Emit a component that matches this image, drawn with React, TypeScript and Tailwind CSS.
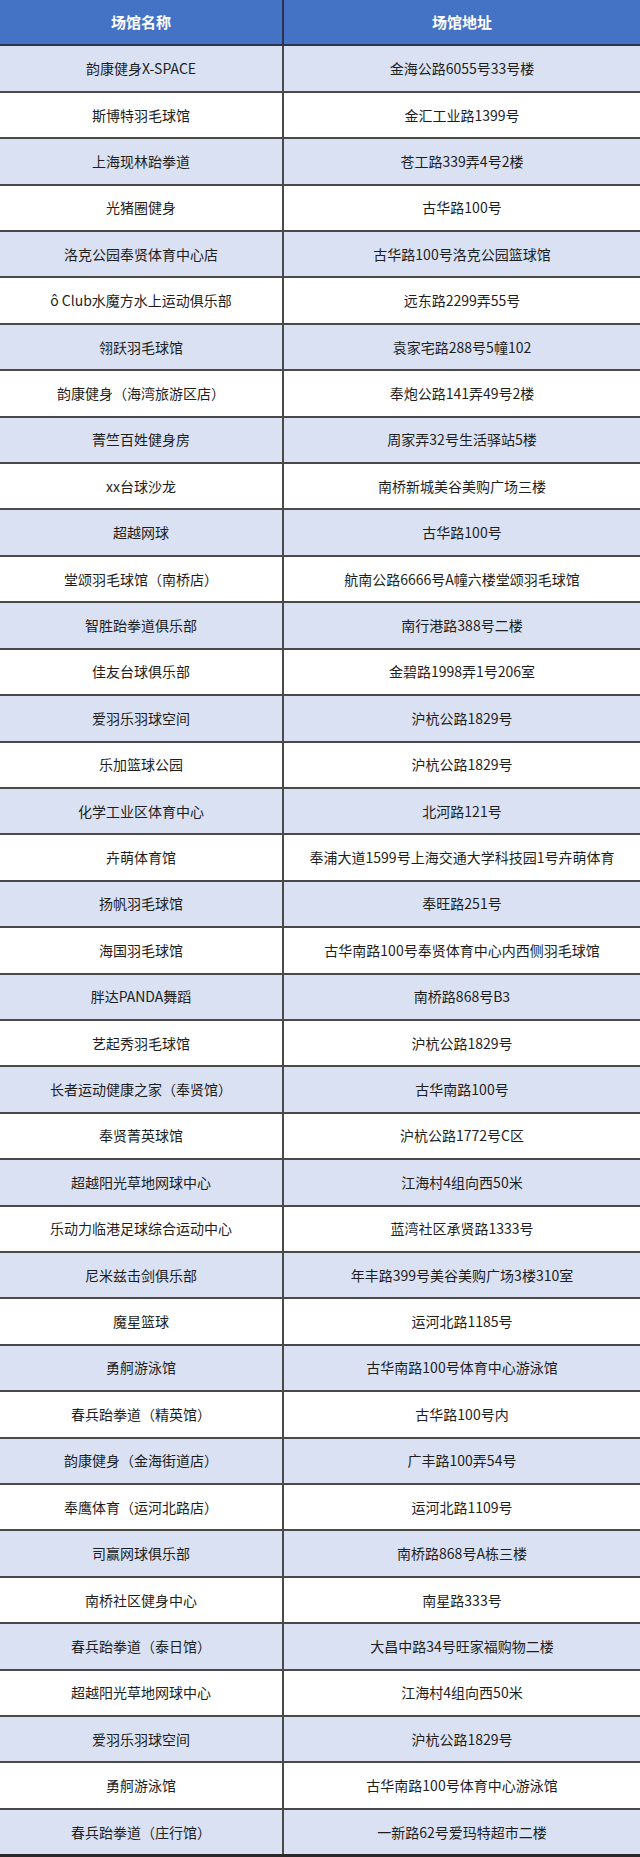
import React from "react";

const rows: [string, string][] = [
  ["韵康健身X-SPACE", "金海公路6055号33号楼"],
  ["斯博特羽毛球馆", "金汇工业路1399号"],
  ["上海现林跆拳道", "苍工路339弄4号2楼"],
  ["光猪圈健身", "古华路100号"],
  ["洛克公园奉贤体育中心店", "古华路100号洛克公园篮球馆"],
  ["ô Club水魔方水上运动俱乐部", "远东路2299弄55号"],
  ["翎跃羽毛球馆", "袁家宅路288号5幢102"],
  ["韵康健身（海湾旅游区店）", "奉炮公路141弄49号2楼"],
  ["菁竺百姓健身房", "周家弄32号生活驿站5楼"],
  ["xx台球沙龙", "南桥新城美谷美购广场三楼"],
  ["超越网球", "古华路100号"],
  ["堂颂羽毛球馆（南桥店）", "航南公路6666号A幢六楼堂颂羽毛球馆"],
  ["智胜跆拳道俱乐部", "南行港路388号二楼"],
  ["佳友台球俱乐部", "金碧路1998弄1号206室"],
  ["爱羽乐羽球空间", "沪杭公路1829号"],
  ["乐加篮球公园", "沪杭公路1829号"],
  ["化学工业区体育中心", "北河路121号"],
  ["卉萌体育馆", "奉浦大道1599号上海交通大学科技园1号卉萌体育"],
  ["扬帆羽毛球馆", "奉旺路251号"],
  ["海国羽毛球馆", "古华南路100号奉贤体育中心内西侧羽毛球馆"],
  ["胖达PANDA舞蹈", "南桥路868号B3"],
  ["艺起秀羽毛球馆", "沪杭公路1829号"],
  ["长者运动健康之家（奉贤馆）", "古华南路100号"],
  ["奉贤菁英球馆", "沪杭公路1772号C区"],
  ["超越阳光草地网球中心", "江海村4组向西50米"],
  ["乐动力临港足球综合运动中心", "蓝湾社区承贤路1333号"],
  ["尼米兹击剑俱乐部", "年丰路399号美谷美购广场3楼310室"],
  ["魔星篮球", "运河北路1185号"],
  ["勇舸游泳馆", "古华南路100号体育中心游泳馆"],
  ["春兵跆拳道（精英馆）", "古华路100号内"],
  ["韵康健身（金海街道店）", "广丰路100弄54号"],
  ["奉鹰体育（运河北路店）", "运河北路1109号"],
  ["司赢网球俱乐部", "南桥路868号A栋三楼"],
  ["南桥社区健身中心", "南星路333号"],
  ["春兵跆拳道（泰日馆）", "大昌中路34号旺家福购物二楼"],
  ["超越阳光草地网球中心", "江海村4组向西50米"],
  ["爱羽乐羽球空间", "沪杭公路1829号"],
  ["勇舸游泳馆", "古华南路100号体育中心游泳馆"],
  ["春兵跆拳道（庄行馆）", "一新路62号爱玛特超市二楼"],
];

export default function App() {
  return (
    <div
      className="w-[640px] h-[1857px] flex flex-col bg-white border-b-[3px] border-[#2a2a2a]"
      style={{ fontFamily: '"Noto Sans CJK SC", "Noto Sans", sans-serif' }}
    >
      <div className="flex-1 flex bg-[#4472c4] border-b-2 border-[#2b3350] text-white font-bold text-[15px]">
        <div className="w-[284px] flex items-center justify-center border-r-2 border-[#2b3350]">场馆名称</div>
        <div className="flex-1 flex items-center justify-center">场馆地址</div>
      </div>
      {rows.map(([name, addr], i) => (
        <div
          key={i}
          className={
            "flex-1 flex text-[14px] text-[#1e1e1e] " +
            (i === rows.length - 1 ? "" : "border-b-2 border-[#4a4a4a] ") +
            (i % 2 === 0 ? "bg-[#d9e1f2]" : "bg-white")
          }
        >
          <div className="w-[284px] flex items-center justify-center border-r-2 border-[#4a4a4a] whitespace-nowrap">
            {name}
          </div>
          <div className="flex-1 flex items-center justify-center whitespace-nowrap">{addr}</div>
        </div>
      ))}
    </div>
  );
}
